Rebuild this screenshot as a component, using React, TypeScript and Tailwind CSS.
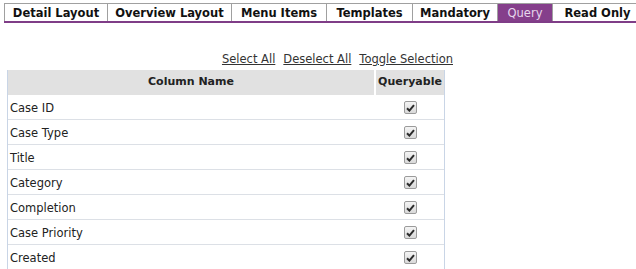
const tabs = [
  { label: 'Detail Layout', w: 'w-[103px]' },
  { label: 'Overview Layout', w: 'w-[124px]' },
  { label: 'Menu Items', w: 'w-[95px]' },
  { label: 'Templates', w: 'w-[86px]' },
  { label: 'Mandatory', w: 'w-[85px]' },
  { label: 'Query', w: 'w-[55px]', active: true },
  { label: 'Read Only', w: 'w-[90px]' },
]

const rows = ['Case ID', 'Case Type', 'Title', 'Category', 'Completion', 'Case Priority', 'Created']

function CheckBox() {
  return (
    <span className="inline-flex h-[13px] w-[13px] items-center justify-center rounded-[2px] border border-[#9b9b9b] bg-gradient-to-b from-[#f4f4f4] to-[#d9d9d9]">
      <svg width="9" height="8" viewBox="0 0 9 8">
        <path d="M1 4.2 L3.4 6.6 L8 1.2" fill="none" stroke="#2b2b2b" strokeWidth="2" />
      </svg>
    </span>
  )
}

function App() {
  return (
    <div className="h-[269px] w-[636px] overflow-hidden bg-white font-['DejaVu_Sans',sans-serif] text-[#222]">
      {/* Tabs */}
      <div className="ml-[4px] mt-[3px] flex border-b-2 border-[#7f3d87]">
        {tabs.map((t) => (
          <div
            key={t.label}
            className={`${t.w} flex h-[18px] shrink-0 items-center justify-center border-l border-t border-[#a0a0a0] pt-[2px] text-[11.5px] font-bold ${
              t.active ? 'bg-[#853f8b] font-normal text-[#e6d6ec]' : 'text-[#111]'
            }`}
          >
            {t.label}
          </div>
        ))}
      </div>

      {/* Selection links */}
      <div className="mt-[29px] flex w-[453px] justify-end gap-[8px] text-[11.5px] leading-[14px] text-[#333]">
        <span className="underline">Select All</span>
        <span className="underline">Deselect All</span>
        <span className="underline">Toggle Selection</span>
      </div>

      {/* Table */}
      <div className="ml-[7px] mt-[4px] w-[438px] border-x border-[#c9d5e6]">
        <div className="flex h-[25px] gap-[2px] text-[11px] font-bold">
          <div className="flex flex-1 items-center justify-center bg-[#e1e1e1]">Column Name</div>
          <div className="flex w-[68px] items-center justify-center bg-[#e1e1e1]">Queryable</div>
        </div>
        {rows.map((r) => (
          <div key={r} className="flex h-[25px] items-center border-b border-[#dce0e6] text-[11.5px]">
            <div className="flex-1 pl-[2px] pt-[3px]">{r}</div>
            <div className="flex w-[68px] justify-center pt-[1px]">
              <CheckBox />
            </div>
          </div>
        ))}
      </div>
    </div>
  )
}

export default App
